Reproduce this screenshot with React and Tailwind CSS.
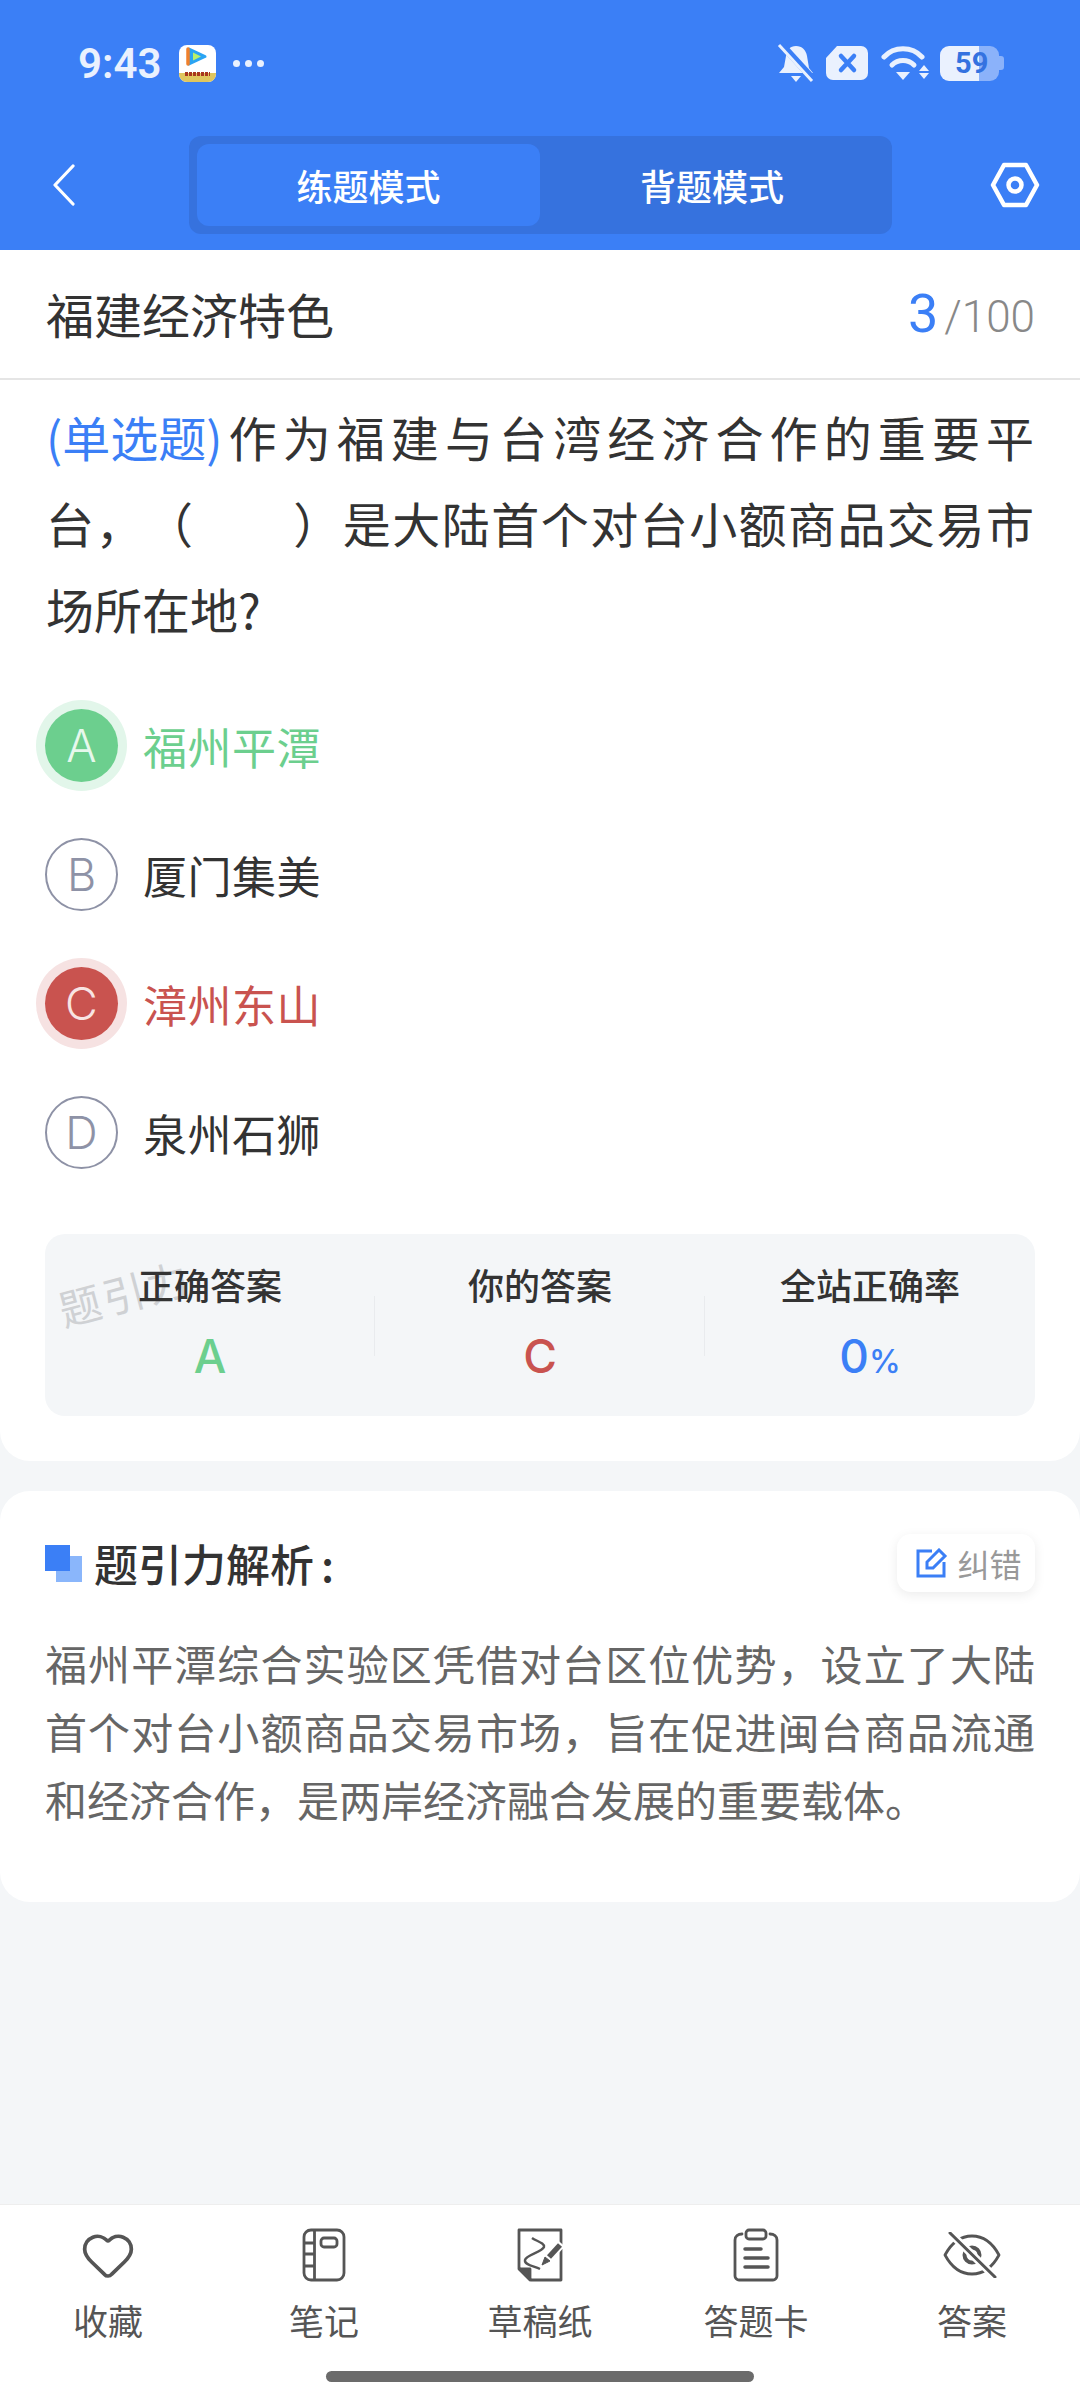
import { Heart } from 'lucide-react';

const sans = "font-['Noto_Sans_CJK_SC','Noto_Sans',sans-serif]";

const options = [
  { key: 'A', text: '福州平潭', state: 'right' },
  { key: 'B', text: '厦门集美', state: 'idle' },
  { key: 'C', text: '漳州东山', state: 'wrong' },
  { key: 'D', text: '泉州石狮', state: 'idle' },
];

const OptionRow = ({ opt }) => {
  let badge = 'border-2 border-[#8e92a6] text-[#8e92a6]';
  let label = 'text-[#333333]';
  if (opt.state === 'right') {
    badge = 'bg-[#6ccf8e] text-[#e6f8ec] shadow-[0_0_0_9px_#e2f6ea]';
    label = 'text-[#6ccf8e]';
  }
  if (opt.state === 'wrong') {
    badge = 'bg-[#c9534f] text-[#f8e4e3] shadow-[0_0_0_9px_#f6e2e2]';
    label = 'text-[#c9534f]';
  }
  return (
    <div className="flex h-[129px] items-center">
      <div className={`flex h-[73px] w-[73px] items-center justify-center rounded-full font-['Inter'] text-[45px] font-light ${badge}`}>
        {opt.key}
      </div>
      <span className={`ml-[25px] text-[44px] tracking-[0.5px] ${label}`}>{opt.text}</span>
    </div>
  );
};

const Stat = ({ label, children, divider }) => (
  <div className="relative flex flex-1 flex-col items-center pt-[27px]">
    <span className="text-[36px] leading-[46px] font-medium text-[#333333]">{label}</span>
    <div className="mt-[22px] font-['Inter'] leading-[54px] font-medium">{children}</div>
    {divider && <div className="absolute top-[62px] right-0 h-[60px] w-px bg-[#e9ebee]" />}
  </div>
);

const Notebook = () => (
  <svg width="44" height="54" viewBox="0 0 44 54" fill="none" stroke="#555555" strokeWidth="2.8">
    <rect x="2" y="2" width="40" height="50" rx="7" />
    <path d="M12.5 2v50M2 15h10.5M2 26h10.5M2 38h10.5" />
    <rect x="19" y="10" width="16" height="9" rx="3" />
  </svg>
);

const Draft = () => (
  <svg width="46" height="54" viewBox="0 0 46 54" fill="none" stroke="#555555" strokeWidth="2.8">
    <path d="M2 2h42v50H14L2 40z" strokeLinejoin="round" />
    <path d="M2 41h11v11z" fill="#555555" strokeLinejoin="round" />
    <path d="M15 10c4 3 13 5 12 9-2 5-18 8-19 13-1 5 9 6 15 9" strokeWidth="2.4" />
    <path d="M44 15L30 31" stroke="#ffffff" strokeWidth="10" />
    <path d="M43 17L32 29" strokeWidth="5.5" />
    <path d="M25 37l3-8 5 4z" fill="#555555" strokeWidth="1" />
  </svg>
);

const AnswerCard = () => (
  <svg width="46" height="54" viewBox="0 0 46 54" fill="none" stroke="#555555" strokeWidth="2.8">
    <path d="M9 6C5 6 2 8 2 12v36c0 2 2 4 4 4h34c2 0 4-2 4-4V12c0-4-3-6-7-6" strokeLinecap="round" />
    <rect x="13" y="2" width="20" height="9" rx="3" />
    <path d="M12 21h16M12 30h23M12 39h23" strokeWidth="3.5" strokeLinecap="round" />
  </svg>
);

const EyeOff = () => (
  <svg width="58" height="46" viewBox="0 0 58 46" fill="none" stroke="#555555" strokeWidth="2.8">
    <path d="M2 23C9 10 19 4 29 4s20 6 27 19c-7 13-17 19-27 19S9 36 2 23z" strokeLinejoin="round" />
    <circle cx="29" cy="23" r="7.5" strokeWidth="4" />
    <path d="M7 1l45 44" stroke="#ffffff" strokeWidth="8" />
    <path d="M7 1l45 44" strokeWidth="3" strokeLinecap="round" />
  </svg>
);

const NavItem = ({ icon, label }) => (
  <div className="flex flex-1 flex-col items-center">
    <div className="flex h-[54px] items-center justify-center">{icon}</div>
    <span className="mt-[15px] text-[35px] leading-[46px] text-[#555555]">{label}</span>
  </div>
);

export default function App() {
  return (
    <div className={`flex h-[2400px] w-[1080px] flex-col bg-[#f4f6f8] ${sans}`}>
      {/* header */}
      <div className="h-[250px] bg-[#3b7ff6]">
        <div className="flex h-[126px] items-center justify-between pr-[76px] pl-[78px] text-[#eaf1fe]">
          <div className="flex items-center">
            <span className="font-['Roboto'] text-[42px] font-semibold">9:43</span>
            <svg className="ml-[18px]" width="37" height="37" viewBox="0 0 37 37">
              <rect width="37" height="37" rx="8" fill="#ffffff" />
              <path d="M0 28h37v1a8 8 0 0 1-8 8H8a8 8 0 0 1-8-8z" fill="#e0c65e" />
              <path d="M10 4l16 7.5L10 19z" fill="#2aa4f4" stroke="#2aa4f4" strokeWidth="3" strokeLinejoin="round" />
              <path d="M9 4v15" stroke="#f0802b" strokeWidth="3.5" strokeLinecap="round" />
              <path d="M14 7.5l8 4-8 4z" fill="#b8f06a" />
              <path d="M6 29h25" stroke="#a8361f" strokeWidth="4" strokeDasharray="3 1" />
            </svg>
            <div className="ml-[17px] flex gap-[5px]">
              <i className="h-[7px] w-[7px] rounded-full bg-[#eaf1fe]" />
              <i className="h-[7px] w-[7px] rounded-full bg-[#eaf1fe]" />
              <i className="h-[7px] w-[7px] rounded-full bg-[#eaf1fe]" />
            </div>
          </div>
          <div className="flex items-center">
            <svg width="38" height="40" viewBox="0 0 38 40" fill="#eaf1fe">
              <path d="M19 3c6 0 10 4 11 10l2 12 4 5H2l5-6 2-11c1-6 4-10 10-10z" />
              <path d="M14 33h10l-5 6z" />
              <path d="M4 1l32 35" stroke="#3b7ff6" strokeWidth="7" />
              <path d="M2 2l33 36" stroke="#eaf1fe" strokeWidth="3" />
            </svg>
            <svg className="ml-[10px]" width="44" height="36" viewBox="0 0 44 36">
              <path d="M12 1h24a7 7 0 0 1 7 7v20a7 7 0 0 1-7 7H8a7 7 0 0 1-7-7V13z" fill="#eaf1fe" />
              <path d="M16 11l13 14M29 11L16 25" stroke="#3b7ff6" strokeWidth="4.5" strokeLinecap="round" />
            </svg>
            <svg className="ml-[12px]" width="48" height="36" viewBox="0 0 48 36" fill="none">
              <path d="M3 12c10-11 28-11 38 0" stroke="#eaf1fe" strokeWidth="5" strokeLinecap="round" />
              <path d="M11 20c6-6 16-6 22 0" stroke="#eaf1fe" strokeWidth="5" strokeLinecap="round" />
              <path d="M15 27h14l-7 8z" fill="#eaf1fe" />
              <path d="M43 20l5 6H38zM38 28h10l-5 6z" fill="#eaf1fe" />
            </svg>
            <div className="relative ml-[11px] flex h-[35px] w-[64px] overflow-hidden">
              <div className="h-full w-[39px] rounded-l-[9px] bg-[#eaf1fe]" />
              <div className="h-full w-[20px] rounded-r-[9px] bg-[#8bb2fa]" />
              <div className="my-auto h-[14px] w-[5px] rounded-r-[3px] bg-[#8bb2fa]" />
              <span className="absolute top-0 left-[15px] font-['Roboto'] text-[29px] leading-[35px] font-bold text-[#3472e0]">59</span>
            </div>
          </div>
        </div>
        <div className="mt-[10px] flex items-center pr-[40px] pl-[52px]">
          <svg width="24" height="42" viewBox="0 0 24 42" fill="none" stroke="#ffffff" strokeWidth="3.2" strokeLinecap="round" strokeLinejoin="round">
            <path d="M21 2L3 21l18 19" />
          </svg>
          <div className="ml-[113px] flex h-[98px] w-[703px] items-center rounded-[12px] bg-[#3672de] px-[8px]">
            <div className="flex h-[82px] w-[343px] items-center justify-center rounded-[12px] bg-[#3b7ff6] text-[36px] font-medium text-white">
              练题模式
            </div>
            <div className="flex h-[82px] flex-1 items-center justify-center text-[36px] font-medium text-white">
              背题模式
            </div>
          </div>
          <svg className="ml-auto" width="50" height="46" viewBox="0 0 50 46" fill="none" stroke="#ffffff" strokeWidth="4.5" strokeLinejoin="round">
            <path d="M14 3h22l11 20-11 20H14L3 23z" />
            <circle cx="25" cy="23" r="6.5" />
          </svg>
        </div>
      </div>

      {/* question card */}
      <div className="h-[1211px] rounded-b-[30px] bg-white">
        <div className="flex h-[130px] items-center justify-between border-b-2 border-[#e5e5e5] pr-[45px] pb-[2px] pl-[46px]">
          <span className="text-[48px] text-[#333333]">福建经济特色</span>
          <div className="flex items-baseline font-['Roboto']">
            <span className="text-[54px] text-[#3b7ff6]">3</span>
            <span className="ml-[6px] text-[44px] font-light text-[#888888]">/100</span>
          </div>
        </div>
        <div className="px-[46px] pt-[13px] text-justify text-[48px] leading-[86px] text-[#333333] [text-spacing-trim:space-all]">
          <span className="inline-block text-[#3b7ff6]">(单选题)</span>
          作为福建与台湾经济合作的重要平台，（　　）是大陆首个对台小额商品交易市场所在地?
        </div>
        <div className="mt-[30px] px-[45px]">
          {options.map((opt) => (
            <OptionRow key={opt.key} opt={opt} />
          ))}
        </div>
        <div className="relative mx-[45px] mt-[37px] flex h-[182px] overflow-hidden rounded-[20px] bg-[#f4f6f8]">
          <span className="absolute top-[26px] left-[12px] -rotate-[15deg] text-[42px] tracking-[3px] text-[#cfd1d4]">题引力</span>
          <Stat label="正确答案" divider>
            <span className="text-[46px] text-[#6ccf8e]">A</span>
          </Stat>
          <Stat label="你的答案" divider>
            <span className="text-[46px] text-[#c9534f]">C</span>
          </Stat>
          <Stat label="全站正确率">
            <span className="text-[46px] text-[#3b7ff6]">0</span>
            <span className="text-[32px] text-[#3b7ff6]">%</span>
          </Stat>
        </div>
      </div>

      {/* analysis card */}
      <div className="mt-[30px] h-[411px] rounded-[30px] bg-white px-[45px] pt-[43px]">
        <div className="flex items-center justify-between">
          <div className="flex items-center">
            <div className="relative h-[37px] w-[37px]">
              <div className="absolute right-0 bottom-0 h-[26px] w-[26px] bg-[#8ab6fb]" />
              <div className="absolute top-0 left-0 h-[26px] w-[25px] bg-[#3b7ff6]" />
            </div>
            <span className="ml-[12px] text-[44px] leading-[58px] font-medium text-[#333333]">
              题引力解析<span className="ml-[7px]">:</span>
            </span>
          </div>
          <div className="flex h-[58px] w-[138px] items-center justify-center rounded-[14px] bg-white pl-[6px] shadow-[0_3px_12px_rgba(0,0,0,0.08)]">
            <svg width="32" height="30" viewBox="0 0 32 30" fill="none" stroke="#3b7ff6" strokeWidth="3">
              <path d="M16 3H2v25h26V14" />
              <path d="M11 20v-6L23 2l6 6-12 12z" />
            </svg>
            <span className="ml-[9px] text-[32px] text-[#999999]">纠错</span>
          </div>
        </div>
        <p className="mt-[37px] text-justify text-[42px] leading-[68px] text-[#666666]">
          福州平潭综合实验区凭借对台区位优势，设立了大陆首个对台小额商品交易市场，旨在促进闽台商品流通和经济合作，是两岸经济融合发展的重要载体。
        </p>
      </div>

      {/* bottom bar */}
      <div className="mt-auto h-[196px] border-t border-[#eeeeee] bg-white pt-[23px]">
        <div className="flex">
          <NavItem icon={<Heart size={56} strokeWidth={1.6} className="text-[#555555]" />} label="收藏" />
          <NavItem icon={<Notebook />} label="笔记" />
          <NavItem icon={<Draft />} label="草稿纸" />
          <NavItem icon={<AnswerCard />} label="答题卡" />
          <NavItem icon={<EyeOff />} label="答案" />
        </div>
        <div className="mx-auto mt-[28px] h-[11px] w-[428px] rounded-full bg-[#6b6b6b]" />
      </div>
    </div>
  );
}
